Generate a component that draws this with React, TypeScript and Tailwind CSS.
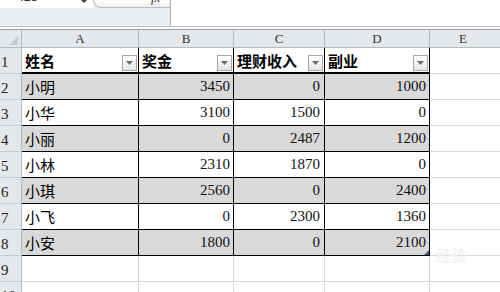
import React from "react";

const rows: [string, number, number, number][] = [
  ["小明", 3450, 0, 1000],
  ["小华", 3100, 1500, 0],
  ["小丽", 0, 2487, 1200],
  ["小林", 2310, 1870, 0],
  ["小琪", 2560, 0, 2400],
  ["小飞", 0, 2300, 1360],
  ["小安", 1800, 0, 2100],
];

const widths = ["w-[117px]", "w-[95px]", "w-[91px]", "w-[105px]"];
const cjk = { fontFamily: '"Noto Sans CJK SC", "Noto Sans", sans-serif' };
const serif = { fontFamily: '"Liberation Serif", serif' };

function RowHead({ n }: { n: number }) {
  return (
    <div
      className="w-[22px] shrink-0 h-full bg-[#e4e7eb] border-r border-b border-r-[#b4b9bf] border-b-[#c9cdd2] flex items-end pb-[2px] pl-[1px] text-[15px] leading-[17px] text-[#222]"
      style={serif}
    >
      {n}
    </div>
  );
}

function FilterBtn() {
  return (
    <div className="absolute right-[1px] bottom-[1px] w-[15px] h-[16px] border border-[#a7a7a7] bg-gradient-to-b from-[#ffffff] to-[#e6e6e6] flex items-center justify-center">
      <svg width="7" height="4" viewBox="0 0 7 4">
        <path d="M0 0 L7 0 L3.5 4 Z" fill="#6b6b6b" />
      </svg>
    </div>
  );
}

export default function App() {
  const headers = ["姓名", "奖金", "理财收入", "副业"];
  return (
    <div className="w-[500px] h-[292px] overflow-hidden bg-white relative">
      {/* formula area */}
      <div className="flex h-[27px] border-b border-[#c3c7cc]">
        <div className="w-[171px] shrink-0 bg-[#e9ecf0] border-r border-[#a9aeb5] flex flex-col">
          <div className="flex h-[8px]">
            <div className="w-[93px] bg-white relative overflow-hidden">
              <span
                className="absolute left-[20px] top-[-10px] text-[13px] leading-[14px] text-[#333]"
                style={{ fontFamily: '"Liberation Sans", sans-serif' }}
              >
                I13
              </span>
              <svg className="absolute left-[81px] top-0" width="6" height="3" viewBox="0 0 6 3">
                <path d="M0 0 L6 0 L3 3 Z" fill="#444" />
              </svg>
            </div>
            <div className="flex-1 relative overflow-hidden bg-gradient-to-b from-[#ffffff] to-[#eceef1] border-b border-l border-[#b9bdc3] rounded-bl-[9px]">
              <span
                className="absolute left-[57px] top-[-9px] text-[13px] leading-[14px] italic text-[#333]"
                style={serif}
              >
                fx
              </span>
            </div>
          </div>
        </div>
        <div className="flex-1 bg-white" />
      </div>
      <div className="h-[3px] bg-white border-b border-[#9ba1a8]" />

      {/* column header */}
      <div className="flex h-[18px]">
        <div className="w-[22px] shrink-0 bg-[#e4e7eb] border-r border-b border-[#b4b9bf] relative">
          <svg className="absolute right-[3px] bottom-[2px]" width="9" height="9" viewBox="0 0 9 9">
            <path d="M9 0 L9 9 L0 9 Z" fill="#c7cbd0" />
          </svg>
        </div>
        {["A", "B", "C", "D"].map((l, i) => (
          <div
            key={l}
            className={`${widths[i]} shrink-0 bg-[#e4e7eb] border-r border-b border-[#b4b9bf] flex items-center justify-center text-[13px] leading-[14px] text-[#333]`}
            style={serif}
          >
            {l}
          </div>
        ))}
        <div
          className="flex-1 bg-[#e4e7eb] border-b border-[#b4b9bf] flex items-center justify-center text-[13px] leading-[14px] text-[#333] pr-[4px]"
          style={serif}
        >
          E
        </div>
      </div>

      {/* row 1 headers */}
      <div className="flex h-[26px]">
        <RowHead n={1} />
        {headers.map((h, i) => (
          <div
            key={h}
            className={`${widths[i]} shrink-0 h-full relative bg-white border-r border-b-2 border-black flex items-end pb-[2px] pl-[3px] text-[15px] leading-[18px] font-bold text-black`}
            style={cjk}
          >
            {h}
            <FilterBtn />
          </div>
        ))}
        <div className="flex-1 h-full border-b border-[#dadada]" />
      </div>

      {/* data rows */}
      {rows.map((r, ri) => {
        const grey = ri % 2 === 0;
        const bg = grey ? "bg-[#d9d9d9]" : "bg-white";
        const last = ri === rows.length - 1;
        return (
          <div key={ri} className="flex h-[26px]">
            <RowHead n={ri + 2} />
            <div
              className={`${widths[0]} shrink-0 h-full ${bg} border-r border-b border-black flex items-end pb-[3px] pl-[3px] text-[15px] leading-[18px] text-black`}
              style={cjk}
            >
              {r[0]}
            </div>
            {[r[1], r[2], r[3]].map((v, ci) => (
              <div
                key={ci}
                className={`${widths[ci + 1]} shrink-0 h-full relative ${bg} border-r border-b border-black flex items-end justify-end pb-[4px] ${ci === 1 ? "pr-[4px]" : "pr-[3px]"} text-[15px] leading-[17px] text-[#111]`}
                style={serif}
              >
                {v}
                {last && ci === 2 ? (
                  <svg className="absolute right-0 bottom-0" width="5" height="5" viewBox="0 0 5 5">
                    <path d="M5 0 L5 5 L0 5 Z" fill="#3a5688" />
                  </svg>
                ) : null}
              </div>
            ))}
            <div className="flex-1 h-full border-b border-[#dadada]" />
          </div>
        );
      })}

      {/* empty rows */}
      {[9, 10].map((n) => (
        <div key={n} className="flex h-[26px]">
          <RowHead n={n} />
          {widths.map((w, i) => (
            <div key={i} className={`${w} shrink-0 h-full border-r border-b border-[#dadada]`} />
          ))}
          <div className="flex-1 h-full border-b border-[#dadada]" />
        </div>
      ))}

      {/* faint watermark */}
      <div
        className="absolute left-[436px] top-[246px] text-[15px] leading-[18px] font-bold text-[#f3f3f3]"
        style={cjk}
      >
        经验
      </div>
    </div>
  );
}
